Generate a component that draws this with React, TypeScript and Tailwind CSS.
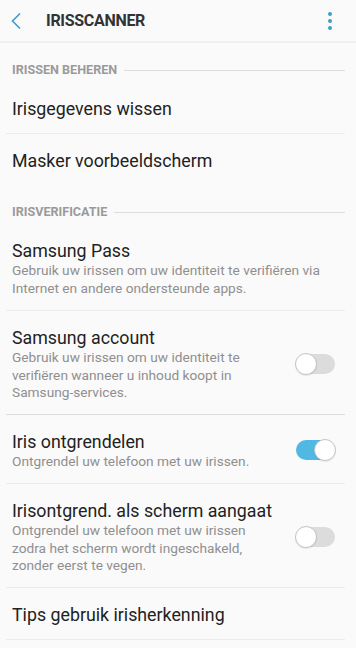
import React from "react";

function Toggle({ on }: { on: boolean }) {
  return (
    <div className="relative w-[40px] h-[22px] shrink-0">
      <div
        className={
          "absolute left-[1px] right-0 top-[1px] h-[20px] rounded-full " +
          (on ? "bg-[#4fb9e3]" : "bg-[#dcdcdc]")
        }
      />
      <div
        className={
          "absolute top-0 w-[22px] h-[22px] rounded-full bg-white border border-[#c4c4c4] shadow-[0_1px_1px_rgba(0,0,0,0.08)] " +
          (on ? "right-[-1px]" : "left-0")
        }
      />
    </div>
  );
}

function Section({ title }: { title: string }) {
  return (
    <div className="flex items-center h-[39px] pt-[16px] pl-[12px] pr-[11px]">
      <span className="text-[12.6px] font-bold text-[#9a9a9a] leading-none">{title}</span>
      <div className="flex-1 h-px bg-[#dedede] ml-[7px]" />
    </div>
  );
}

function Divider({ dark }: { dark?: boolean }) {
  return <div className={"ml-[6px] mr-[11px] h-px " + (dark ? "bg-[#dcdcdc]" : "bg-[#ececec]")} />;
}

function Row({
  title,
  sub,
  toggle,
  tight,
}: {
  title: string;
  sub?: string;
  toggle?: "on" | "off";
  tight?: boolean;
}) {
  if (!sub) {
    return (
      <div className="flex items-center h-[51px] pl-[12px] pt-[3px]">
        <span className="text-[17.8px] text-[#222] leading-[22px]">{title}</span>
      </div>
    );
  }
  return (
    <div className={"flex items-center pl-[12px] pr-[21px] pt-[16px] " + (tight ? "pb-[12px]" : "pb-[13px]")}>
      <div className="flex-1">
        <div className="text-[17.8px] text-[#222] leading-[22px]">{title}</div>
        <div className={"text-[13.7px] text-[#8f8f8f] leading-[17.5px] " + (toggle ? "w-[262px]" : "")}>{sub}</div>
      </div>
      {toggle && <Toggle on={toggle === "on"} />}
    </div>
  );
}

export default function App() {
  return (
    <div
      className="w-[356px] h-[648px] bg-[#fafafa] overflow-hidden"
      style={{ fontFamily: "Roboto, 'Noto Sans', sans-serif" }}
    >
      <div className="h-[43px] flex items-center border-b-2 border-[#f0f0f0]">
        <div className="w-[46px] flex items-center pl-[10px] pt-[1px]">
          <svg width="12" height="18" viewBox="0 0 12 18">
            <path d="M10 1.5 L2.5 9 L10 16.5" fill="none" stroke="#3d9dcb" strokeWidth="1.6" />
          </svg>
        </div>
        <span className="text-[16px] font-bold text-[#333] tracking-[-0.3px] flex-1 pt-[1px]">IRISSCANNER</span>
        <div className="w-[52px] flex flex-col items-center gap-[3px] pt-[1px]">
          <div className="w-[4px] h-[4px] rounded-full bg-[#3d9dcb]" />
          <div className="w-[4px] h-[4px] rounded-full bg-[#3d9dcb]" />
          <div className="w-[4px] h-[4px] rounded-full bg-[#3d9dcb]" />
        </div>
      </div>
      <Section title="IRISSEN BEHEREN" />
      <Row title="Irisgegevens wissen" />
      <Divider />
      <Row title="Masker voorbeeldscherm" />
      <Section title="IRISVERIFICATIE" />
      <Row
        title="Samsung Pass"
        sub="Gebruik uw irissen om uw identiteit te verifiëren via Internet en andere ondersteunde apps."
      />
      <Divider />
      <Row
        title="Samsung account"
        sub="Gebruik uw irissen om uw identiteit te verifiëren wanneer u inhoud koopt in Samsung-services."
        toggle="off"
        tight
      />
      <Divider dark />
      <Row title="Iris ontgrendelen" sub="Ontgrendel uw telefoon met uw irissen." toggle="on" />
      <Divider />
      <Row
        title="Irisontgrend. als scherm aangaat"
        sub="Ontgrendel uw telefoon met uw irissen zodra het scherm wordt ingeschakeld, zonder eerst te vegen."
        toggle="off"
        tight
      />
      <Divider />
      <Row title="Tips gebruik irisherkenning" />
      <Divider />
    </div>
  );
}
